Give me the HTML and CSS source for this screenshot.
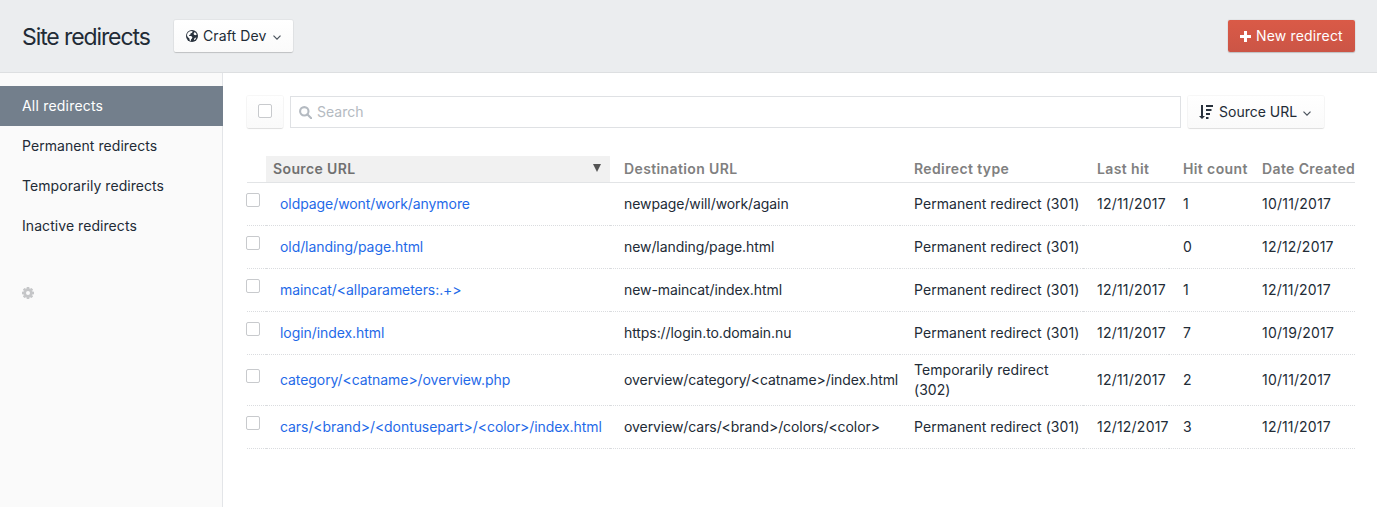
FILE: index.html
```html
<!DOCTYPE html>
<html lang="en">
<head>
<meta charset="utf-8">
<title>Site redirects</title>
<link rel="stylesheet" href="styles.css">
</head>
<body>
<header class="header">
  <h1 class="title">Site redirects</h1>
  <button class="btn site-btn">
    <svg class="globe" viewBox="0 0 12 12"><circle cx="6" cy="6" r="6" fill="#29323d"/><path d="M3.400 1.400 5.200.9l1.600.6-.8 1.300-1.500.7-.2 1.200-1.300.3.300.9 1.900.2 1.200 1.100-.5 1.300-.9.900-.1 1.600-1.200-.6-.3-1.800L1.700 6.900.9 5.200l.7-2.300ZM8.200 1.800l1.700 1.100.9 1.700-1.300.7-1.500-.6-.5-1.100.9-.7ZM8.600 8l1.700-.6-1 2-1.500.9Z" fill="#fff"/></svg>
    <span class="t-site">Craft Dev</span>
    <svg class="chev" viewBox="0 0 8 5"><path d="M.5.6 4 4.100 7.500.6"/></svg>
  </button>
  <button class="btn submit">
    <svg class="plus" viewBox="0 0 11 11"><path d="M4 0h3v4h4v3H7v4H4V7H0V4h4z" fill="#fff"/></svg>
    <span class="t-new">New redirect</span>
  </button>
</header>
<div class="main">
  <nav class="sidebar">
    <a class="nav sel"><span>All redirects</span></a>
    <a class="nav"><span>Permanent redirects</span></a>
    <a class="nav"><span>Temporarily redirects</span></a>
    <a class="nav"><span>Inactive redirects</span></a>
    <svg class="gear" viewBox="-6 -6 12 12"><g fill="#c5c6c8"><circle r="4.500"/><path d="M-1.200-6h2.400l.4 2h-3.200zM-1.200 6h2.400l.4-2h-3.200zM-6-1.200v2.400l2 .4v-3.200zM6-1.200v2.400l-2 .4v-3.200z"/><path transform="rotate(45)" d="M-1.200-6h2.400l.4 2h-3.200zM-1.200 6h2.400l.4-2h-3.200zM-6-1.200v2.400l2 .4v-3.200zM6-1.200v2.400l-2 .4v-3.200z"/></g><circle r="2" fill="#fafafa"/></svg>
  </nav>
  <main class="content">
    <div class="toolbar">
      <div class="btn light selectall"><i class="check"></i></div>
      <div class="search">
        <svg class="mag" viewBox="0 0 13 13"><circle cx="5.300" cy="5.300" r="4.200"/><path d="m8.500 8.500 3.700 3.700"/></svg>
        <span>Search</span>
      </div>
      <button class="btn light sort">
        <svg class="sorticon" viewBox="0 0 14 14"><path d="M2 0h2v11h2L3 14 0 11h2zM7 0h7v2H7zM7 4h5.500v2H7zM7 8h4v2H7zM7 12h2.500v2H7z" fill="#29323d"/></svg>
        <span class="t-sort">Source URL</span>
        <svg class="chev" viewBox="0 0 8 5"><path d="M.5.6 4 4.100 7.500.6"/></svg>
      </button>
    </div>
    <table class="data">
      <colgroup><col class="c1"><col class="c2"><col class="c3"><col class="c4"><col class="c5"><col class="c6"><col class="c7"></colgroup>
      <thead><tr><th></th><th class="ordered"><div><span>Source URL</span><svg class="tri" viewBox="0 0 8 8"><path d="M0 0h8L4 8z" fill="#555"/></svg></div></th><th>Destination URL</th><th>Redirect type</th><th>Last hit</th><th>Hit count</th><th>Date Created</th></tr></thead>
      <tbody>
        <tr><td><i class="check"></i></td><td><a>oldpage/wont/work/anymore</a></td><td>newpage/will/work/again</td><td>Permanent redirect (301)</td><td>12/11/2017</td><td>1</td><td>10/11/2017</td></tr>
        <tr><td><i class="check"></i></td><td><a>old/landing/page.html</a></td><td>new/landing/page.html</td><td>Permanent redirect (301)</td><td></td><td>0</td><td>12/12/2017</td></tr>
        <tr><td><i class="check"></i></td><td><a>maincat/&lt;allparameters:.+&gt;</a></td><td>new-maincat/index.html</td><td>Permanent redirect (301)</td><td>12/11/2017</td><td>1</td><td>12/11/2017</td></tr>
        <tr><td><i class="check"></i></td><td><a>login/index.html</a></td><td>https://login.to.domain.nu</td><td>Permanent redirect (301)</td><td>12/11/2017</td><td>7</td><td>10/19/2017</td></tr>
        <tr class="tall"><td><i class="check"></i></td><td><a>category/&lt;catname&gt;/overview.php</a></td><td>overview/category/&lt;catname&gt;/index.html</td><td>Temporarily redirect<br>(302)</td><td>12/11/2017</td><td>2</td><td>10/11/2017</td></tr>
        <tr><td><i class="check"></i></td><td><a>cars/&lt;brand&gt;/&lt;dontusepart&gt;/&lt;color&gt;/index.html</a></td><td>overview/cars/&lt;brand&gt;/colors/&lt;color&gt;</td><td>Permanent redirect (301)</td><td>12/12/2017</td><td>3</td><td>12/11/2017</td></tr>
      </tbody>
    </table>
  </main>
</div>
</body>
</html>
```
FILE: styles.css
```css
* { box-sizing: border-box; }
body { margin: 0; height: 507px; overflow: hidden; display: flex; flex-direction: column; font: 14px/20px Inter, "Liberation Sans", sans-serif; color: #222b36; background: #fff; }
.header { height: 73px; flex: none; display: flex; align-items: center; padding: 0 22px; background: #ebedef; border-bottom: 1px solid #dddfe1; }
.title { margin: 0; padding-top: 2px; width: 152px; font-size: 23px; line-height: 30px; font-weight: 400; letter-spacing: -1.1px; white-space: nowrap; }
.btn { display: flex; align-items: center; height: 32px; padding: 0 12px; border: 0; border-radius: 2px; font: inherit; color: inherit; white-space: nowrap; background: linear-gradient(#fff, #fafafa); box-shadow: 0 0 0 1px rgba(0,0,0,.03), 0 1px 1px rgba(0,0,0,.16); }
.site-btn { width: 119px; letter-spacing: .13px; }
.globe { width: 12px; height: 12px; margin-right: 5px; }
.chev { width: 8px; height: 5px; margin: 3px 0 0 auto; overflow: visible; fill: none; stroke: #4a525c; stroke-width: 1.2; }
.submit { width: 127px; margin-left: auto; color: #fff; letter-spacing: .17px; background: linear-gradient(#da5a47, #cb5546); }
.plus { width: 11px; height: 11px; margin-right: 5px; }
.main { flex: 1; display: flex; }
.sidebar { width: 223px; flex: none; padding-top: 13px; background: #fafafa; border-right: 1px solid #e3e5e8; }
.nav { display: block; height: 40px; padding-left: 22px; line-height: 40px; letter-spacing: .06px; }
.sel { margin-right: -1px; color: #fff; background: #737f8c; letter-spacing: .2px; }
.gear { display: block; width: 12px; height: 12px; margin: 41px 0 0 22px; }
.content { flex: 1; padding: 23px 22px 0 24px; }
.toolbar { display: flex; height: 32px; }
.light { box-shadow: 0 0 0 1px rgba(0,0,0,.03), 0 1px 1px rgba(0,0,0,.1); }
.selectall { width: 36px; padding: 0 0 2px 11px; margin-right: 7px; }
.check { display: block; width: 14px; height: 14px; border: 1px solid #c8cacd; border-radius: 2px; background: #fff; }
.search { width: 891px; display: flex; align-items: center; gap: 5px; padding-left: 8px; border: 1px solid #dfe1e4; color: #b4bac1; }
.mag { width: 13px; height: 13px; fill: none; stroke: #b4bac1; stroke-width: 2.1; stroke-linecap: round; }
.sort { width: 136px; margin-left: 7px; padding-right: 13px; }
.sorticon { width: 14px; height: 14px; margin: 0 6px 0 -1px; }
.data { width: 1108px; margin-top: 28px; table-layout: fixed; border-collapse: separate; border-spacing: 0; white-space: nowrap; }
.c1 { width: 19px; } .c2 { width: 344px; } .c3 { width: 290px; } .c4 { width: 183px; } .c5 { width: 86px; } .c6 { width: 79px; } .c7 { width: 107px; }
th { height: 27px; padding: 0 0 0 14px; text-align: left; color: #808080; font-weight: 600; letter-spacing: .38px; border-bottom: 1px solid #e2e4e6; }
th.ordered { padding: 0 9px 0 7px; background: #f1f1f1; color: #707070; }
th.ordered div { display: flex; align-items: center; justify-content: space-between; }
.tri { width: 8px; height: 8px; margin-top: -2px; }
td { height: 43px; padding: 0 0 0 14px; border-bottom: 1px dotted #dadcdf; vertical-align: middle; }
td:first-child { padding: 0 0 8px; }
td:nth-child(2) { letter-spacing: -.07px; }
td:nth-child(3) { letter-spacing: -.08px; }
td:nth-child(4) { letter-spacing: .05px; }
td:nth-child(5), td:nth-child(7) { letter-spacing: .22px; }
td .check { margin-left: -1px; }
.tall td { height: 51px; }
td a { color: #1f6ae8; }
```
